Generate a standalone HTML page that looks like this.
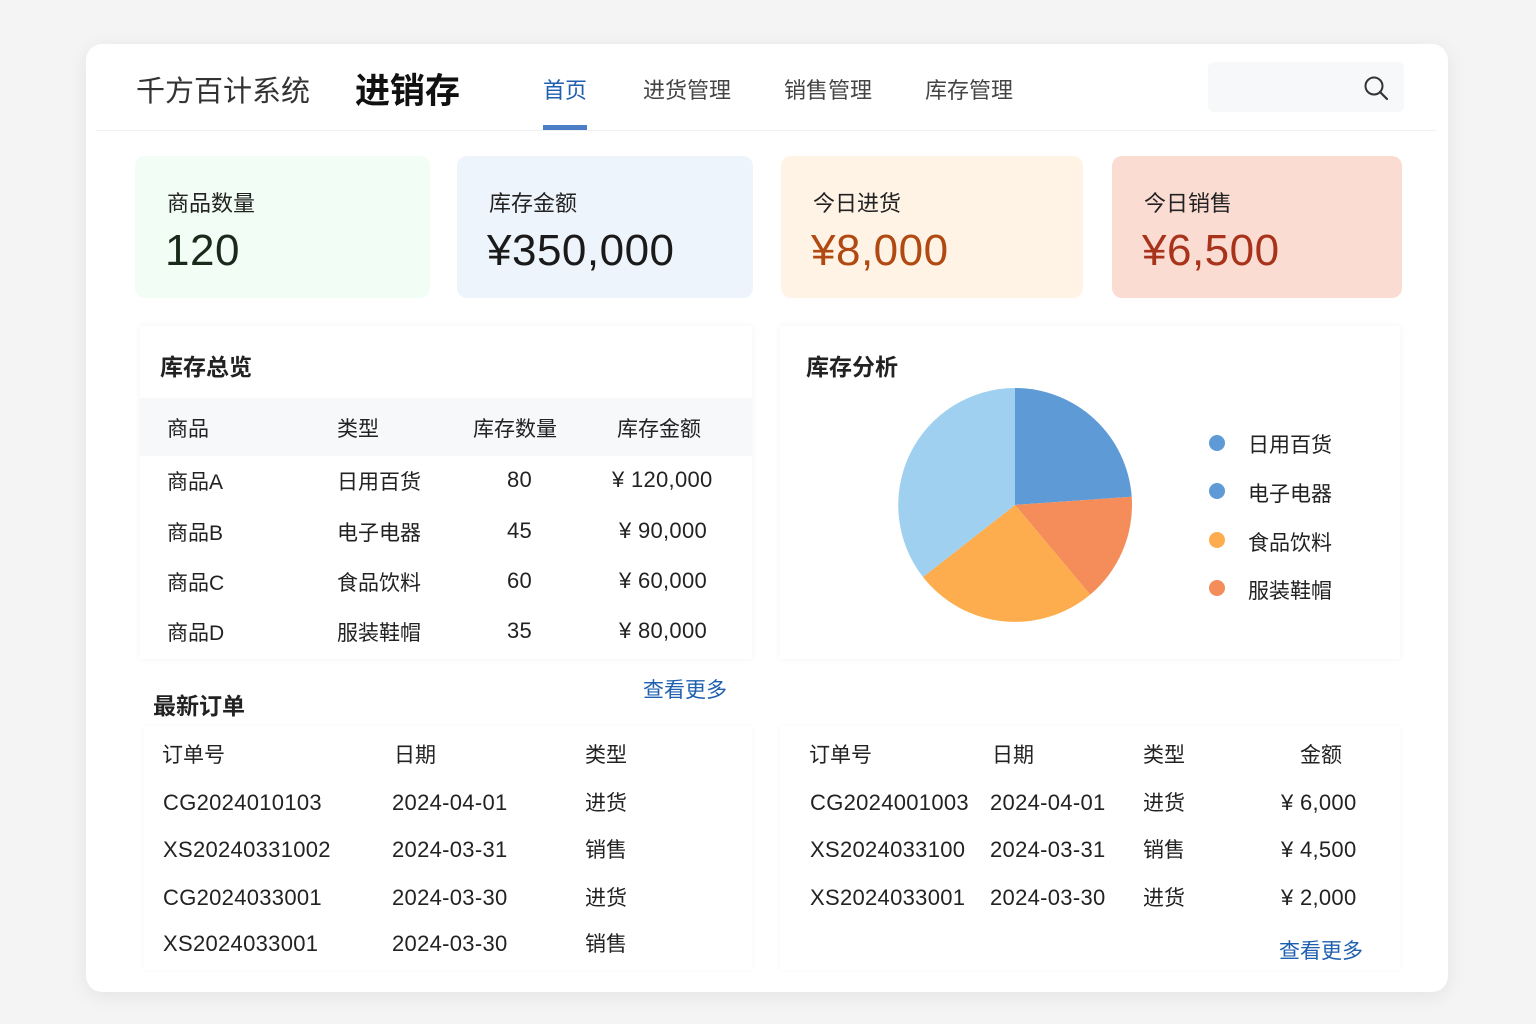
<!DOCTYPE html>
<html><head><meta charset="utf-8"><style>
*{margin:0;padding:0;box-sizing:border-box}
body{width:1536px;height:1024px;background:#f4f4f5;font-family:"Liberation Sans","Noto Sans CJK SC",sans-serif;color:#222;position:relative;overflow:hidden}
.a{position:absolute;white-space:nowrap}
.card{position:absolute;left:86px;top:44px;width:1362px;height:948px;background:#fff;border-radius:16px;box-shadow:0 4px 20px rgba(0,0,0,.07)}
.stat{position:absolute;top:156px;height:142px;border-radius:10px}
.stat .l{position:absolute;left:32px;top:30px;font-size:22px;color:#222}
.stat .v{position:absolute;left:30px;top:70px;font-size:44px;font-weight:500;letter-spacing:.5px}
.panel{position:absolute;background:#fff;box-shadow:0 0 6px rgba(0,0,0,.05)}
.t{font-size:21px;color:#222}
.n{font-size:22px;color:#222;letter-spacing:.3px;margin-top:1px}
.h{font-size:23px;font-weight:bold;color:#222}
.blue{color:#1f5fb0}
</style></head><body>
<div class="card"></div>
<div class="a" style="left:136px;top:68px;font-size:29px;color:#333">千方百计系统</div>
<div class="a" style="left:355px;top:63px;font-size:35px;font-weight:bold;color:#111">进销存</div>
<div class="a blue" style="left:543px;top:73px;font-size:22px">首页</div>
<div class="a" style="left:543px;top:125px;width:44px;height:5px;background:#4a7fc8"></div>
<div class="a" style="left:643px;top:73px;font-size:22px;color:#444">进货管理</div>
<div class="a" style="left:784px;top:73px;font-size:22px;color:#444">销售管理</div>
<div class="a" style="left:925px;top:73px;font-size:22px;color:#444">库存管理</div>
<div class="a" style="left:1208px;top:62px;width:196px;height:50px;background:#f7f8f9;border-radius:6px"></div>
<svg class="a" style="left:1362px;top:74px" width="28" height="28" viewBox="0 0 28 28"><circle cx="12" cy="12" r="8.5" fill="none" stroke="#333" stroke-width="2"/><line x1="18" y1="18" x2="25" y2="25" stroke="#333" stroke-width="2.2" stroke-linecap="round"/></svg>
<div class="a" style="left:96px;top:130px;width:1340px;height:1px;background:#f0f0f0"></div>

<div class="stat" style="left:135px;width:295px;background:#f1fdf5"><div class="l">商品数量</div><div class="v" style="color:#1a2a1a">120</div></div>
<div class="stat" style="left:457px;width:296px;background:#eef4fb"><div class="l">库存金额</div><div class="v" style="color:#1a1a1a">¥350,000</div></div>
<div class="stat" style="left:781px;width:302px;background:#fff3e5"><div class="l">今日进货</div><div class="v" style="color:#b04a12">¥8,000</div></div>
<div class="stat" style="left:1112px;width:290px;background:#fbdcd3"><div class="l">今日销售</div><div class="v" style="color:#a8321a">¥6,500</div></div>

<div class="panel" style="left:140px;top:326px;width:612px;height:333px"></div>
<div class="a h" style="left:160px;top:348px">库存总览</div>
<div class="a" style="left:140px;top:398px;width:612px;height:58px;background:#f7f8f9"></div>
<div class="a t" style="left:167px;top:413px">商品</div><div class="a t" style="left:337px;top:413px">类型</div><div class="a t" style="left:473px;top:413px">库存数量</div><div class="a t" style="left:617px;top:413px">库存金额</div>
<div class="a t" style="left:167px;top:466px">商品A</div><div class="a t" style="left:337px;top:466px">日用百货</div><div class="a n" style="left:507px;top:466px">80</div><div class="a n" style="left:612px;top:466px">¥ 120,000</div>
<div class="a t" style="left:167px;top:517px">商品B</div><div class="a t" style="left:337px;top:517px">电子电器</div><div class="a n" style="left:507px;top:517px">45</div><div class="a n" style="left:619px;top:517px">¥ 90,000</div>
<div class="a t" style="left:167px;top:567px">商品C</div><div class="a t" style="left:337px;top:567px">食品饮料</div><div class="a n" style="left:507px;top:567px">60</div><div class="a n" style="left:619px;top:567px">¥ 60,000</div>
<div class="a t" style="left:167px;top:617px">商品D</div><div class="a t" style="left:337px;top:617px">服装鞋帽</div><div class="a n" style="left:507px;top:617px">35</div><div class="a n" style="left:619px;top:617px">¥ 80,000</div>

<div class="panel" style="left:780px;top:326px;width:620px;height:333px"></div>
<div class="a h" style="left:806px;top:348px">库存分析</div>
<svg class="a" style="left:0;top:0" width="1536" height="1024">
<path d="M1015 505 L1015 388 A117 117 0 0 1 1131.7 496.8 Z" fill="#5e9bd6"/>
<path d="M1015 505 L1131.7 496.8 A117 117 0 0 1 1090.2 594.6 Z" fill="#f48d5a"/>
<path d="M1015 505 L1090.2 594.6 A117 117 0 0 1 923 577 Z" fill="#fdad4e"/>
<path d="M1015 505 L923 577 A117 117 0 0 1 1015 388 Z" fill="#a0d0ef"/>
<circle cx="1217" cy="443" r="8" fill="#5e9bd6"/><circle cx="1217" cy="491" r="8" fill="#5e9bd6"/><circle cx="1217" cy="540" r="8" fill="#fdad4e"/><circle cx="1217" cy="588" r="8" fill="#f48d5a"/>
</svg>
<div class="a t" style="left:1248px;top:429px">日用百货</div>
<div class="a t" style="left:1248px;top:478px">电子电器</div>
<div class="a t" style="left:1248px;top:527px">食品饮料</div>
<div class="a t" style="left:1248px;top:575px">服装鞋帽</div>

<div class="a h" style="left:153px;top:687px">最新订单</div>
<div class="a blue" style="left:643px;top:674px;font-size:21px">查看更多</div>
<div class="panel" style="left:144px;top:726px;width:608px;height:244px;box-shadow:0 0 5px rgba(0,0,0,.04)"></div>
<div class="a t" style="left:162px;top:739px">订单号</div><div class="a t" style="left:394px;top:739px">日期</div><div class="a t" style="left:585px;top:739px">类型</div>
<div class="a n" style="left:163px;top:789px">CG2024010103</div><div class="a n" style="left:392px;top:789px">2024-04-01</div><div class="a t" style="left:585px;top:787px">进货</div>
<div class="a n" style="left:163px;top:836px">XS20240331002</div><div class="a n" style="left:392px;top:836px">2024-03-31</div><div class="a t" style="left:585px;top:834px">销售</div>
<div class="a n" style="left:163px;top:884px">CG2024033001</div><div class="a n" style="left:392px;top:884px">2024-03-30</div><div class="a t" style="left:585px;top:882px">进货</div>
<div class="a n" style="left:163px;top:930px">XS2024033001</div><div class="a n" style="left:392px;top:930px">2024-03-30</div><div class="a t" style="left:585px;top:928px">销售</div>

<div class="panel" style="left:780px;top:726px;width:620px;height:244px;box-shadow:0 0 5px rgba(0,0,0,.04)"></div>
<div class="a t" style="left:809px;top:739px">订单号</div><div class="a t" style="left:992px;top:739px">日期</div><div class="a t" style="left:1143px;top:739px">类型</div><div class="a t" style="left:1300px;top:739px">金额</div>
<div class="a n" style="left:810px;top:789px">CG2024001003</div><div class="a n" style="left:990px;top:789px">2024-04-01</div><div class="a t" style="left:1143px;top:787px">进货</div><div class="a n" style="left:1281px;top:789px">¥ 6,000</div>
<div class="a n" style="left:810px;top:836px">XS2024033100</div><div class="a n" style="left:990px;top:836px">2024-03-31</div><div class="a t" style="left:1143px;top:834px">销售</div><div class="a n" style="left:1281px;top:836px">¥ 4,500</div>
<div class="a n" style="left:810px;top:884px">XS2024033001</div><div class="a n" style="left:990px;top:884px">2024-03-30</div><div class="a t" style="left:1143px;top:882px">进货</div><div class="a n" style="left:1281px;top:884px">¥ 2,000</div>
<div class="a blue" style="left:1279px;top:935px;font-size:21px">查看更多</div>
</body></html>
